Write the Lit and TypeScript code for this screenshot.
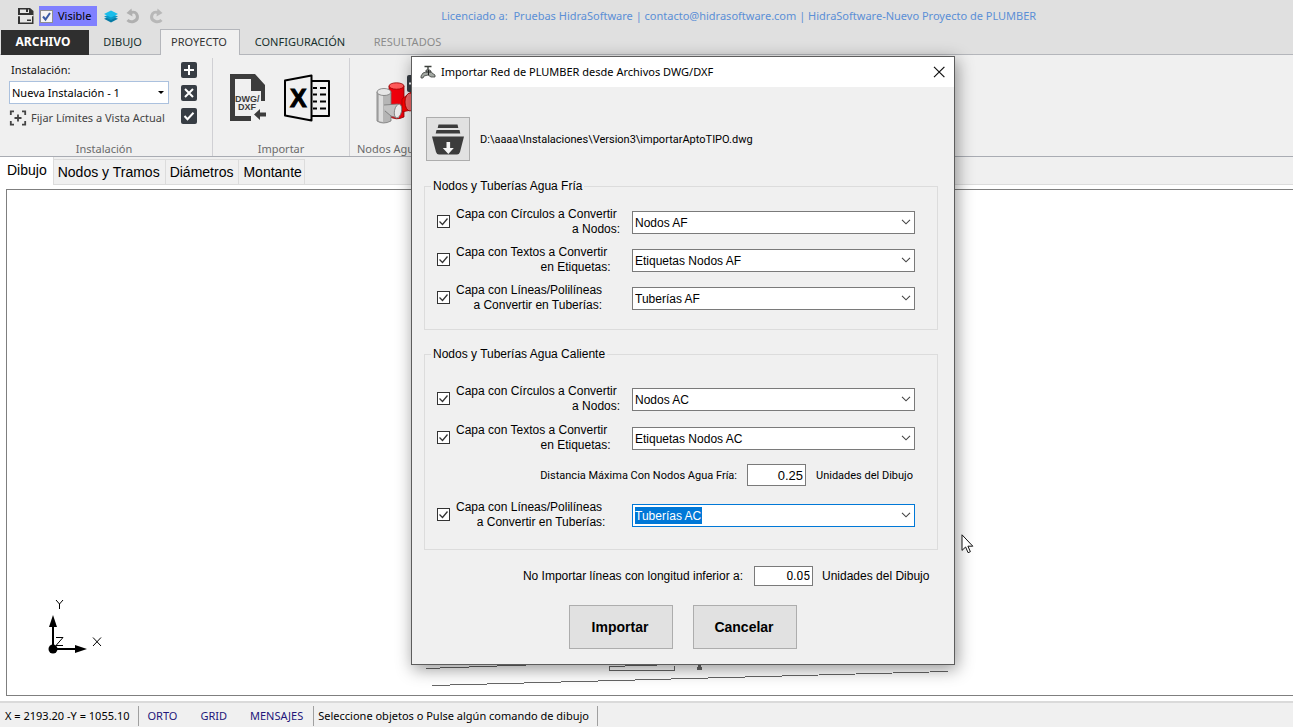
import { LitElement, html, css, svg, nothing } from "lit";
import { customElement, property } from "lit/decorators.js";

interface LayerRow {
  id: string;
  first: string;
  second: string;
  value: string;
  active?: boolean;
}

const coldRows: LayerRow[] = [
  { id: "cold-nodes", first: "Capa con Círculos a Convertir\u00a0", second: "a Nodos:", value: "Nodos AF" },
  { id: "cold-tags", first: "Capa con Textos a Convertir\u00a0", second: "en Etiquetas:", value: "Etiquetas Nodos AF" },
  { id: "cold-pipes", first: "Capa con Líneas/Polilíneas", second: "a Convertir en Tuberías:", value: "Tuberías AF" },
];

const hotRows: LayerRow[] = [
  { id: "hot-nodes", first: "Capa con Círculos a Convertir\u00a0", second: "a Nodos:", value: "Nodos AC" },
  { id: "hot-tags", first: "Capa con Textos a Convertir\u00a0", second: "en Etiquetas:", value: "Etiquetas Nodos AC" },
  { id: "hot-pipes", first: "Capa con Líneas/Polilíneas\u00a0", second: "a Convertir en Tuberías:", value: "Tuberías AC", active: true },
];

@customElement("import-dialog")
export class ImportDialog extends LitElement {
  static styles = css`
    :host {
      display: block;
      box-sizing: border-box;
      border: 1px solid #5d5d5d;
      background: #f0f0f0;
      box-shadow: 2px 4px 16px rgba(0, 0, 0, 0.42);
      font: 12px/15px "Liberation Sans", Arial, sans-serif;
      color: #000;
    }
    * {
      box-sizing: border-box;
    }
    .titlebar {
      display: flex;
      align-items: center;
      height: 30px;
      padding: 0 8px;
      background: #fff;
    }
    .titlebar svg {
      display: block;
    }
    .title {
      flex: 1;
      margin: 0 0 0 5px;
      font: 400 11px/16px "Noto Sans", "Open Sans", sans-serif;
    }
    .close {
      padding: 0;
      border: 0;
      background: none;
    }
    .body {
      padding: 30px 16px 15px 12px;
    }
    .source {
      display: flex;
      align-items: center;
      gap: 10px;
      padding-left: 2px;
    }
    .open {
      display: grid;
      place-items: center;
      width: 44px;
      height: 44px;
      padding: 0;
      border: 1px solid #adadad;
      background: #e1e1e1;
    }
    .path {
      padding-top: 2px;
      font: 11px/16px Roboto, sans-serif;
    }
    .group {
      margin: 18px 0 0;
      padding: 13px 22px 16px 12px;
      border: 1px solid #dcdcdc;
      min-width: 0;
    }
    .group.hot {
      margin-top: 17px;
      padding: 22px 22px 19px 12px;
    }
    .group legend {
      margin-left: -6px;
      padding: 0 2px;
      line-height: 15px;
    }
    .rows {
      display: flex;
      flex-direction: column;
      gap: 8px;
    }
    .hot .rows {
      gap: 9px;
    }
    .row {
      display: grid;
      grid-template-columns: 13px 170px 1fr;
      column-gap: 6px;
      align-items: center;
    }
    .caption {
      justify-self: start;
      display: block;
    }
    .caption span {
      display: block;
      text-align: right;
      white-space: pre;
    }
    input[type="checkbox"] {
      appearance: none;
      width: 13px;
      height: 13px;
      margin: 0 0 2px;
      border: 1px solid #333;
      background: #fff
        url("data:image/svg+xml,%3Csvg xmlns='http://www.w3.org/2000/svg' viewBox='0 0 11 11'%3E%3Cpath d='M1.5 5.5l3 3 5-6' fill='none' stroke='%23333' stroke-width='1.3'/%3E%3C/svg%3E");
    }
    select {
      appearance: none;
      width: 100%;
      height: 23px;
      padding: 2px 20px 0 2px;
      border: 1px solid #7a7a7a;
      border-radius: 0;
      outline: 0;
      background-color: #fff;
      background-image: url("data:image/svg+xml,%3Csvg xmlns='http://www.w3.org/2000/svg' viewBox='0 0 10 6'%3E%3Cpath d='M1 .8l4 4 4-4' fill='none' stroke='%23444' stroke-width='1.1'/%3E%3C/svg%3E");
      background-repeat: no-repeat;
      background-position: right 3px center;
      background-size: 10px 6px;
      font: inherit;
      color: #000;
    }
    select.active {
      border-color: #0078d7;
      color: #fff;
      background-image: url("data:image/svg+xml,%3Csvg xmlns='http://www.w3.org/2000/svg' viewBox='0 0 10 6'%3E%3Cpath d='M1 .8l4 4 4-4' fill='none' stroke='%23444' stroke-width='1.1'/%3E%3C/svg%3E"),
        linear-gradient(#0078d7, #0078d7);
      background-position: right 3px center, 2px center;
      background-size: 10px 6px, 67px 17px;
    }
    option {
      background: #fff;
      color: #000;
    }
    .distance {
      display: flex;
      align-items: center;
      justify-content: flex-end;
      gap: 10px;
      padding-right: 2px;
      margin: 2px 0 5px;
      font: 11px/15px Roboto, sans-serif;
    }
    .number {
      width: 59px;
      height: 22px;
      padding: 1px 2px 0 0;
      border: 1px solid #7a7a7a;
      text-align: right;
      font: 13px/16px "Liberation Sans", Arial, sans-serif;
      color: #000;
    }
    .minimum {
      display: flex;
      align-items: center;
      justify-content: flex-end;
      gap: 9px;
      margin: 16px 4px 0 0;
    }
    .minimum .number {
      height: 20px;
      padding: 0 2px 0 0;
      font: 12px/16px Roboto, sans-serif;
    }
    .minimum label {
      margin-right: 2px;
    }
    .minimum span {
      min-width: 112px;
    }
    .actions {
      display: flex;
      justify-content: center;
      gap: 20px;
      margin-top: 19px;
      padding-left: 4px;
    }
    .actions button {
      width: 104px;
      height: 44px;
      padding: 0 2px 0 0;
      border: 1px solid #adadad;
      background: #e1e1e1;
      font: 700 14px/16px "Liberation Sans", Arial, sans-serif;
      color: #000;
    }
  `;

  private renderRow(row: LayerRow) {
    return html`<div class="row">
      <input type="checkbox" id=${`${row.id}-on`} checked />
      <label class="caption" for=${`${row.id}-on`}><span>${row.first}</span><span>${row.second}</span></label>
      <select class=${row.active ? "active" : nothing} aria-label=${row.value}>
        <option>${row.value}</option>
      </select>
    </div>`;
  }

  render() {
    return html`
      <header class="titlebar">
        <svg width="16" height="14" viewBox="0 0 16 14" fill="none" stroke="#3c403c">
          <path d="M4.500 1.500h7M8 1v4" stroke-width="1.4" />
          <path d="M6 5h4l2 3 3 2v2h-4l-3-2-4 1-1 2H1v-2l2-3 3-1z" fill="#a3a8a3" stroke-width=".8" />
          <path d="M6 7h5M8.500 5v5" stroke="#222" />
        </svg>
        <h1 class="title">Importar Red de PLUMBER desde Archivos DWG/DXF</h1>
        <button class="close" aria-label="Cerrar">
          <svg width="13" height="12" viewBox="0 0 13 12"><path d="M1 .8l10.400 10.400M11.400 .8L1 11.200" stroke="#111" stroke-width="1.2" /></svg>
        </button>
      </header>
      <div class="body">
        <div class="source">
          <button class="open" aria-label="Abrir archivo">
            <svg width="32" height="32" viewBox="0 0 32 32" fill="#3c3c3c">
              <path d="M6.500 1.500h19l.8 3.500H5.700zM4.500 7h23l.8 3.500H3.700zM0 13.500h32l-4 15.500q-.8 2.500-3 2.500H7q-2.200 0-3-2.500z" />
              <path d="M14.500 19h3.600v6h3.700L16.300 31l-5.500-6h3.700z" fill="#f4f4f4" />
            </svg>
          </button>
          <span class="path">D:\\aaaa\\Instalaciones\\Version3\\importarAptoTIPO.dwg</span>
        </div>
        <fieldset class="group">
          <legend>Nodos y Tuberías Agua Fría</legend>
          <div class="rows">${coldRows.map((r) => this.renderRow(r))}</div>
        </fieldset>
        <fieldset class="group hot">
          <legend>Nodos y Tuberías Agua Caliente</legend>
          <div class="rows">
            ${hotRows.slice(0, 2).map((r) => this.renderRow(r))}
            <div class="distance">
              <label for="distance">Distancia Máxima Con Nodos Agua Fría:</label>
              <input class="number" id="distance" type="text" value="0.25" />
              <span>Unidades del Dibujo</span>
            </div>
            ${this.renderRow(hotRows[2])}
          </div>
        </fieldset>
        <div class="minimum">
          <label for="minimum">No Importar líneas con longitud inferior a:</label>
          <input class="number" id="minimum" type="text" value="0.05" />
          <span>Unidades del Dibujo</span>
        </div>
        <div class="actions">
          <button>Importar</button>
          <button>Cancelar</button>
        </div>
      </div>
    `;
  }
}

@customElement("tool-ribbon")
export class ToolRibbon extends LitElement {
  static styles = css`
    :host {
      display: flex;
      height: 102px;
      padding: 3px 0 0;
      box-sizing: border-box;
      background: #f0f0f0;
      border-bottom: 1px solid #a9acb3;
      font: 11px/16px "Noto Sans", "Open Sans", sans-serif;
      color: #444;
    }
    * {
      box-sizing: border-box;
    }
    .group {
      display: flex;
      flex-direction: column;
      justify-content: space-between;
      align-items: center;
      height: 98px;
      border-right: 1px solid #d0d0d4;
      white-space: nowrap;
    }
    .group:first-child .name {
      padding-right: 4px;
    }
    .group:last-child {
      align-items: flex-start;
      padding-left: 7px;
      border-right: 0;
    }
    .name {
      color: #6a6a6a;
      line-height: 14px;
    }
    .install {
      display: grid;
      grid-template-columns: 160px 16px;
      column-gap: 12px;
      padding: 0 15px 0 9px;
      align-items: center;
      grid-auto-rows: 23px;
    }
    .install label {
      padding-left: 2px;
      color: #111;
    }
    select {
      appearance: none;
      width: 100%;
      height: 23px;
      padding: 0 16px 0 2px;
      border: 1px solid #abc1de;
      border-radius: 0;
      color: #000;
      font: inherit;
      background: #fff
        url("data:image/svg+xml,%3Csvg xmlns='http://www.w3.org/2000/svg' viewBox='0 0 6 3'%3E%3Cpath d='M0 0h6L3 3z'/%3E%3C/svg%3E")
        no-repeat right 4px center / 6px 3px;
    }
    button {
      display: flex;
      align-items: center;
      gap: 4px;
      padding: 0;
      border: 0;
      background: none;
      font: inherit;
      color: #444;
    }
    .limits {
      padding-top: 4px;
    }
    .icons {
      display: flex;
      gap: 16px;
      padding: 16px 18px 0 17px;
    }
    .nodes {
      display: flex;
      align-items: flex-start;
      padding: 17px 6px 0 19px;
    }
    .dwg {
      font: 700 9px "Liberation Sans", Arial, sans-serif;
    }
    .excel {
      font: 900 25px "Liberation Sans", Arial, sans-serif;
    }
  `;

  private square(glyph: unknown, label: string) {
    return html`<button aria-label=${label}>
      <svg width="16" height="16" viewBox="0 0 16 16">
        <rect width="16" height="16" rx="2" fill="#373d44" />
        <g fill="none" stroke="#fff" stroke-width="2">${glyph}</g>
      </svg>
    </button>`;
  }

  render() {
    return html`
      <section class="group">
        <div class="install">
          <label for="installation">Instalación:</label>
          ${this.square(svg`<path d="M8 3v10M3 8h10" />`, "Añadir")}
          <select id="installation"><option>Nueva Instalación - 1</option></select>
          ${this.square(svg`<path d="M4 4l8 8M12 4l-8 8" />`, "Eliminar")}
          <button class="limits">
            <svg width="18" height="16" viewBox="0 0 18 16" fill="none" stroke="#444" stroke-width="1.8">
              <path d="M1.800 5V1.300H5M13 1.300h3.200V5M16.200 11v3.700H13M5 14.700H1.800V11" />
              <path d="M9 4.500v7M5.500 8h7" />
            </svg>
            Fijar Límites a Vista Actual
          </button>
          ${this.square(svg`<path d="M3.500 8l3 3.200 6-6.400" />`, "Aceptar")}
        </div>
        <span class="name">Instalación</span>
      </section>
      <section class="group">
        <div class="icons">
          <button aria-label="Importar DWG o DXF">
            <svg width="38" height="48" viewBox="0 0 38 48" fill="#3c3c3c">
              <path d="M0 0h25l10 11v16h-4V17H21V5H5v37h16v5H0z" />
              <g class="dwg">
                <text x="5" y="28">DWG/</text>
                <text x="8" y="36">DXF</text>
              </g>
              <path d="M24 40.500l6-5.500v3.500h6v4h-6V46z" />
            </svg>
          </button>
          <button aria-label="Importar Excel">
            <svg width="47" height="48" viewBox="0 0 47 48" fill="none" stroke="#000" stroke-width="2">
              <path d="M1 6.500L27.500 1.500v45L1 41.500zM27.500 7H45v35H27.500" stroke-linejoin="round" />
              <path d="M29 14h4M36 14h6M29 20.500h4M36 20.500h6M29 27.500h4M36 27.500h6M29 34.500h4M36 34.500h6" />
              <text class="excel" x="6" y="33" fill="#000" stroke="#000" stroke-width="1">X</text>
            </svg>
          </button>
        </div>
        <span class="name">Importar</span>
      </section>
      <section class="group">
        <div class="nodes">
          <button aria-label="Nodos">
            <svg width="46" height="50" viewBox="0 0 46 50" stroke-width=".8">
              <path d="M13 11v30q7 5 15 1V11z" fill="#f0000c" stroke="#8b0000" />
              <path d="M26 24l9-7v18l-9 2z" fill="#f00" stroke="#b00000" />
              <ellipse cx="34" cy="27" rx="5" ry="9" fill="#f26b6b" stroke="#900" />
              <ellipse cx="20.500" cy="11" rx="7.500" ry="3.200" fill="#ff5a5a" stroke="#900" />
              <path d="M1 17v29q6 4 14 0V17z" fill="#b5b5b5" stroke="#777" />
              <path d="M3 20v26l4 1V20z" fill="#ddd" stroke="none" />
              <path d="M8 30l14-1 1 14-8-2-7-7z" fill="#c2c2c2" />
              <path d="M8 30l14-1M9 36l6 5 6 2" fill="none" stroke="#777" />
              <ellipse cx="8" cy="17" rx="7" ry="3.500" fill="#e6e6e6" stroke="#777" />
              <ellipse cx="22" cy="36" rx="3.500" ry="7" transform="rotate(12 22 36)" fill="#ececec" stroke="#777" />
              <rect x="31" y="0" width="15" height="17" rx="2" fill="#373d44" />
              <path d="M33 8.500h10" stroke="#fff" stroke-width="2" />
            </svg>
          </button>
        </div>
        <span class="name">Nodos Agua Fría</span>
      </section>
    `;
  }
}

@customElement("app-root")
export class AppRoot extends LitElement {
  @property({ type: Boolean }) layersVisible = true;

  static styles = css`
    :host {
      display: flex;
      flex-direction: column;
      position: relative;
      box-sizing: border-box;
      height: 100vh;
      overflow: hidden;
      background: #fff;
      font: 11px/16px "Noto Sans", "Open Sans", sans-serif;
      color: #000;
    }
    * {
      box-sizing: border-box;
    }
    button {
      padding: 0;
      border: 0;
      background: none;
      font: inherit;
      color: inherit;
    }
    button svg {
      display: block;
    }
    .quick {
      display: flex;
      align-items: center;
      gap: 20px;
      height: 30px;
      padding: 2px 0 0 17px;
      background: #e0e0e0;
    }
    .tools {
      display: flex;
      align-items: center;
      gap: 7px;
    }
    .visible {
      display: flex;
      align-items: center;
      gap: 5px;
      height: 20px;
      padding: 0 6px 0 1px;
      margin-left: -2px;
      background: #8080ff;
    }
    .visible input {
      appearance: none;
      width: 13px;
      height: 13px;
      margin: 0;
      border: 1px solid #8e8f8f;
      background: #f4f4f4
        url("data:image/svg+xml,%3Csvg xmlns='http://www.w3.org/2000/svg' viewBox='0 0 11 11'%3E%3Cpath d='M2 5.500l2.500 3L9 2' fill='none' stroke='%233a5ba5' stroke-width='2'/%3E%3C/svg%3E");
    }
    .licence {
      flex: 1;
      text-align: center;
      color: #5b8fd6;
      white-space: pre;
    }
    .tabs {
      display: flex;
      height: 25px;
      padding-left: 1px;
      background: #e0e0e0;
      box-shadow: inset 0 -1px #b4b6bb;
      color: #17302d;
    }
    .tab {
      width: 71px;
      padding: 0 4px 1px 0;
    }
    .tab.file {
      width: 88px;
      background: #2f2f2f;
      color: #fff;
      font-weight: 700;
      font-size: 12px;
    }
    .tab.current {
      width: 80px;
      margin-top: -1px;
      padding-right: 2px;
      border: 1px solid #b4b6bb;
      border-bottom: 0;
      background: #f0f0f0;
      color: #333;
    }
    .tab.wide {
      width: 120px;
      padding-right: 0;
    }
    .tab.off {
      width: 95px;
      padding-right: 0;
      color: #8c8c8c;
    }
    .views {
      display: flex;
      height: 28px;
      padding-top: 2px;
      border-bottom: 1px solid #dcdcdc;
      background: #f0f0f0;
      font: 14px/20px "Liberation Sans", Arial, sans-serif;
    }
    .view {
      padding: 0 5px 1px 4px;
      border: solid #dcdcdc;
      border-width: 1px 1px 0 0;
    }
    .view:last-child {
      padding-right: 2px;
    }
    .view.current {
      margin-top: -2px;
      margin-bottom: -1px;
      padding: 0 6px 2px 7px;
      border-top: 0;
      background: #fff;
    }
    .drawing {
      flex: 1;
      position: relative;
      margin: 4px 0 5px 6px;
      border: 1px solid #7f7f7f;
      border-right: 0;
      background: #fff;
    }
    .axes {
      position: absolute;
      left: 38px;
      bottom: 37px;
    }
    .plan {
      position: absolute;
      left: 418px;
      bottom: 4px;
    }
    .status {
      display: flex;
      align-items: center;
      height: 26px;
      padding: 2px 0 0 5px;
      border-top: 2px solid #dadada;
      background: #f0f0f0;
      white-space: nowrap;
    }
    .cell {
      display: flex;
      align-items: center;
      height: 20px;
      padding-right: 8px;
      margin-right: 4px;
      border-right: 1px solid #a0a0a0;
    }
    .modes {
      gap: 23px;
      padding: 0 10px 0 5px;
      color: #23157a;
    }
    .dialog {
      position: absolute;
      left: 411px;
      top: 56px;
      width: 544px;
    }
    .pointer {
      position: absolute;
      left: 961px;
      top: 534px;
    }
  `;

  render() {
    return html`
      <header class="quick">
        <div class="tools">
          <button aria-label="Guardar">
            <svg width="17" height="16" viewBox="0 0 17 16">
              <path d="M1 0h12l3.500 3v13H1z" fill="#333" />
              <path d="M3 1.500h9V5H3zM1 7h15.500v1.200H1zM3 8h12v6.500H3z" fill="#e6e6e6" />
              <path d="M9 0h2v4H9zM10 11.500h4V13h-4z" fill="#333" />
            </svg>
          </button>
          <label class="visible"><input type="checkbox" ?checked=${this.layersVisible} />Visible</label>
          <button aria-label="Capas">
            <svg width="14" height="13" viewBox="0 0 15 13">
              <path d="M0 9l7.500-3L15 9l-7.500 4z" fill="#067ba5" />
              <path d="M0 6.500l7.500-3 7.500 3-7.500 3.700z" fill="#0a98c8" />
              <path d="M0 3.700L7.500 0 15 3.700 7.500 7.500z" fill="#19bdea" />
            </svg>
          </button>
          <button aria-label="Deshacer">
            <svg width="16" height="16" viewBox="0 0 16 16"><path d="M6 4.500Q11 3 12.200 7.500T8.500 13.500Q5 14.500 2.500 12" fill="none" stroke="#b0b0b0" stroke-width="3" /><path d="M1.500 5L6.500.5l1 8z" fill="#b0b0b0" /></svg>
          </button>
          <button aria-label="Rehacer">
            <svg width="16" height="16" viewBox="0 0 16 16"><path d="M10 4.500Q5 3 3.800 7.500T7.500 13.500Q11 14.500 13.500 12" fill="none" stroke="#b8b8b8" stroke-width="3" /><path d="M14.500 5L9.500.5l-1 8z" fill="#b8b8b8" /></svg>
          </button>
        </div>
        <div class="licence">Licenciado a:  Pruebas HidraSoftware | contacto@hidrasoftware.com | HidraSoftware-Nuevo Proyecto de PLUMBER</div>
      </header>
      <nav class="tabs">
        <button class="tab file">ARCHIVO</button>
        <button class="tab">DIBUJO</button>
        <button class="tab current">PROYECTO</button>
        <button class="tab wide">CONFIGURACIÓN</button>
        <button class="tab off">RESULTADOS</button>
      </nav>
      <tool-ribbon></tool-ribbon>
      <nav class="views">
        <button class="view current">Dibujo</button>
        <button class="view">Nodos y Tramos</button>
        <button class="view">Diámetros</button>
        <button class="view">Montante</button>
      </nav>
      <main class="drawing">
        <svg class="axes" width="62" height="60" viewBox="0 0 62 60" fill="none" stroke="#000">
          <path d="M8 51V22M8 51h26" stroke-width="2" />
          <path d="M8 17l4 12H4zM42 51l-12-4v8z" fill="#000" stroke="none" />
          <circle cx="8" cy="51" r="4.500" fill="#000" stroke="none" />
          <path d="M11 2l3.500 4L18 2M14.500 6v5M11 39.500h7l-7 8h7M48 39.500l8 8.500M56 39.500L48 48" stroke-width="1" />
        </svg>
        <svg class="plan" width="525" height="40" viewBox="0 0 525 40" fill="none" stroke="#666" shape-rendering="crispEdges">
          <path d="M1 17.500L130 13M7 34.500L523 20.500M184 15v4h65v-4M184 15.500l65-2" />
          <path d="M274 12v6M272 17.500h5" stroke-width="3" />
        </svg>
      </main>
      <footer class="status">
        <span class="cell">X = 2193.20 -Y = 1055.10</span>
        <div class="cell modes"><button>ORTO</button><button>GRID</button><button>MENSAJES</button></div>
        <span class="cell">Seleccione objetos o Pulse algún comando de dibujo</span>
      </footer>
      <import-dialog class="dialog" role="dialog"></import-dialog>
      <svg class="pointer" width="13" height="20" viewBox="0 0 13 20">
        <path d="M1 .8v15.600l3.600-3.400 2.500 5.700 2.300-1-2.500-5.500h4.900z" fill="#fff" stroke="#111" />
      </svg>
    `;
  }
}
